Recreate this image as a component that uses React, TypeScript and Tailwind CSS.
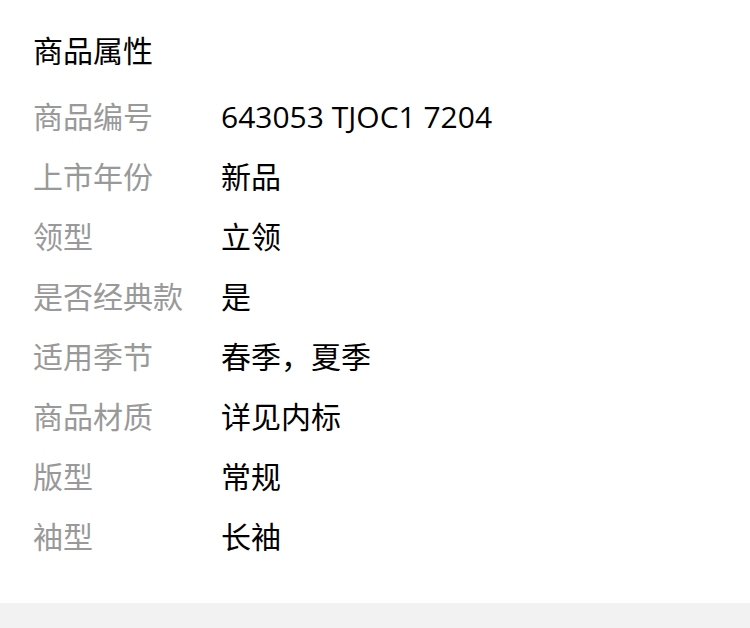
const rows: [string, string][] = [
  ["商品编号", "643053 TJOC1 7204"],
  ["上市年份", "新品"],
  ["领型", "立领"],
  ["是否经典款", "是"],
  ["适用季节", "春季，夏季"],
  ["商品材质", "详见内标"],
  ["版型", "常规"],
  ["袖型", "长袖"],
];

export default function App() {
  return (
    <div className="min-h-screen bg-white font-['Open_Sans','Noto_Sans_CJK_SC',sans-serif]">
      <div className="px-[33px] pt-[20px] pb-[37px]">
        <h2 className="flex h-[60px] items-center text-[30px] font-normal text-black">商品属性</h2>
        <div className="mt-[6px]">
          {rows.map(([label, value]) => (
            <div key={label} className="flex h-[60px] items-center text-[30px]">
              <span className="w-[188px] shrink-0 text-[#999999]">{label}</span>
              <span className="text-black">{value}</span>
            </div>
          ))}
        </div>
      </div>
      <div className="h-[25px] bg-[#f2f2f2]" />
    </div>
  );
}
